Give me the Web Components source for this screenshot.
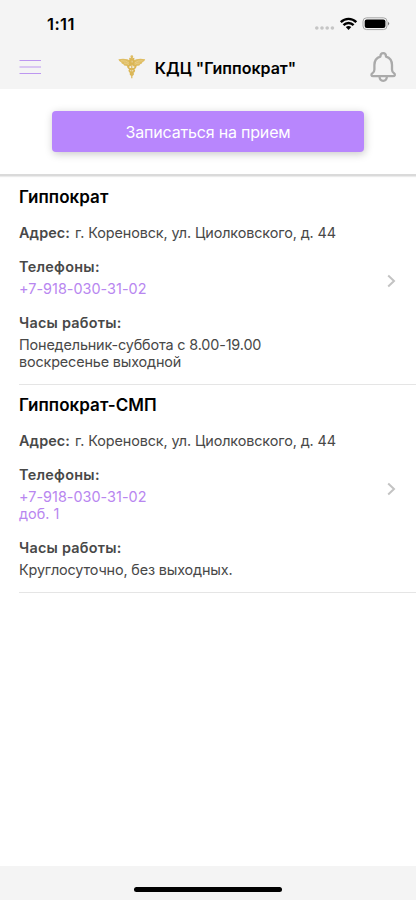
<!DOCTYPE html>
<html lang="ru">
<head>
<meta charset="utf-8">
<title>КДЦ "Гиппократ"</title>
<style>
body { margin: 0; background: #fff; font-family: Inter, "Liberation Sans", sans-serif; color: #000; }
</style>
</head>
<body>
<clinic-app></clinic-app>
<script>
function define(name, html) {
  const template = document.createElement('template');
  template.innerHTML = html;
  customElements.define(name, class extends HTMLElement {
    constructor() {
      super();
      this.attachShadow({ mode: 'open' }).append(template.content.cloneNode(true));
    }
  });
}

define('status-bar', `
<style>
:host { display: flex; height: 47px; box-sizing: border-box; padding: 14px 26.5px 0 47px; justify-content: space-between; align-items: flex-start; }
.time { font-size: 16.5px; line-height: 20px; font-weight: 600; letter-spacing: .4px; }
svg { display: block; }
</style>
<span class="time">1:11</span>
<svg width="76" height="20" viewBox="0 0 76 20">
  <g fill="#c5c5c5"><circle cx="2.8" cy="14" r="1.8"/><circle cx="8" cy="14" r="1.8"/><circle cx="13.2" cy="14" r="1.8"/><circle cx="18.4" cy="14" r="1.8"/></g>
  <g fill="none" stroke="#000" stroke-width="2.4">
    <path d="M26.8 8.2C31.2 3.7 37.9 3.7 42.3 8.2"/>
    <path d="M29.5 11.2C32.3 8.3 36.8 8.3 39.6 11.2"/>
  </g>
  <path d="M31.8 13.1Q34.55 10.8 37.3 13.1L34.55 16Z"/>
  <rect x="49" y="3.8" width="24" height="11.8" rx="3.6" fill="#f4f4f4" stroke="#a5a5a5"/>
  <rect x="50.7" y="5.4" width="20.7" height="8.6" rx="2"/>
  <path d="M74 7.8Q76.4 9.6 74 11.4Z" fill="#777"/>
</svg>`);

define('nav-bar', `
<style>
:host { display: grid; grid-template-columns: 22px 1fr 28px; align-items: center; height: 40px; padding: 0 19px; }
.title { display: flex; align-items: center; justify-content: center; gap: 9px; padding-left: 4px; font-size: 16px; line-height: 22px; font-weight: 600; white-space: nowrap; }
.title span { padding-top: 1px; }
svg { display: block; flex: none; }
</style>
<svg width="22" height="16" viewBox="0 0 22 16" stroke="#bd97f0" stroke-width="1.1"><path d="M.5 1.5H22M.5 8H22M.5 14.5H22"/></svg>
<div class="title">
  <svg width="28" height="24" viewBox="0 0 28 24">
    <g fill="#dfbd62">
      <path d="M.4 4.2Q8 2.5 13 6V11Q10 12.7 8.3 10.8Q6 11.2 5.4 9.2Q3.2 9 3.2 7.3Q1 6.8.4 4.2Z"/>
      <path d="M27.2 4.2Q19.6 2.5 14.6 6V11Q17.6 12.7 19.3 10.8Q21.6 11.2 22.2 9.2Q24.4 9 24.4 7.3Q26.6 6.8 27.2 4.2Z"/>
      <circle cx="13.8" cy="1.7" r="1.4"/>
    </g>
    <g fill="none" stroke="#dbb655">
      <path stroke-width="1.2" d="M13.8 2V23.2"/>
      <path stroke-width="1.7" d="M11.2 3.6C16.6 4.6 17.5 7.4 13.8 8.8C8.8 10.3 8.8 13.2 13.8 14C17.4 14.8 16.8 17 13.8 17.6C11.6 18.4 12.4 19.8 13.8 20.3M16.4 3.6C11 4.6 10.1 7.4 13.8 8.8C18.8 10.3 18.8 13.2 13.8 14C10.2 14.8 10.8 17 13.8 17.6C16 18.4 15.2 19.8 13.8 20.3"/>
    </g>
    <path d="M3 5.8Q8 5.3 11 8M24.6 5.8Q19.6 5.3 16.6 8M6 8Q9 7.7 11 9.7M21.6 8Q18.6 7.7 16.6 9.7" fill="none" stroke="#eed9a0" stroke-width=".6"/>
  </svg>
  <span><slot></slot></span>
</div>
<svg width="28" height="32" viewBox="0 0 28 32" fill="none" stroke="#aaa" stroke-width="2.3" stroke-linejoin="round">
  <path d="M11.4 5.6Q11.4 2.2 14.2 2.2Q17 2.2 17 5.6Q23 7.4 23 14V18.5Q23 21.2 25 22.3Q26.2 23.1 25.8 24.3Q25.4 25.2 24 25.2H4.2Q2.8 25.2 2.5 24.3Q2.1 23.1 3.4 22.3Q5.4 21.2 5.4 18.5V14Q5.4 7.4 11.4 5.6Z"/>
  <path d="M10.5 25.5Q10.8 29.8 14.2 29.8Q17.6 29.8 17.9 25.5"/>
</svg>`);

define('action-button', `
<style>
:host { display: block; }
button { display: block; width: 100%; height: 41px; padding: 0; border: 0; border-radius: 4px; background: #b886fd; color: #fff; font: 400 16px/42px Inter, "Liberation Sans", sans-serif; letter-spacing: -.19px; box-shadow: 1px 2px 8px rgba(0,0,0,.22); }
</style>
<button><slot></slot></button>`);

define('clinic-row', `
<style>
:host { display: grid; grid-template-columns: 1fr 9px; align-items: center; height: 208px; box-sizing: border-box; margin-left: 19px; padding-right: 20px; border-bottom: 1px solid #e5e5e5; font-size: 14.4px; line-height: 18px; color: #484848; }
.info { align-self: start; padding-top: 10px; white-space: nowrap; }
.name { color: #000; font-size: 17px; line-height: 20px; font-weight: 600; letter-spacing: .06px; margin-bottom: 17px; }
.label { font-weight: 600; letter-spacing: .28px; }
.address { display: flex; gap: 5px; letter-spacing: -.11px; }
.address .label { letter-spacing: .12px; }
.group { margin-top: 16px; }
.hours { margin-top: 17px; }
.hours .label { letter-spacing: .24px; }
.value { margin-top: 4px; line-height: 17px; }
.phone { color: #b886f0; letter-spacing: .03px; }
.schedule { letter-spacing: -.15px; }
svg { display: block; }
</style>
<div class="info">
  <div class="name"><slot name="name"></slot></div>
  <div class="address"><span class="label">Адрес:</span><slot name="address"></slot></div>
  <div class="group"><div class="label">Телефоны:</div><div class="value phone"><slot name="phone"></slot></div></div>
  <div class="group hours"><div class="label">Часы работы:</div><div class="value schedule"><slot name="hours"></slot></div></div>
</div>
<svg width="9" height="14" viewBox="0 0 9 14" fill="none" stroke="#c3c3c3" stroke-width="2"><path d="M1.2 1.5L7 7L1.2 12.5"/></svg>`);

define('clinic-app', `
<style>
:host { display: flex; flex-direction: column; width: 416px; height: 900px; overflow: hidden; background: #fff; }
header { background: #f4f4f4; height: 88.5px; box-sizing: border-box; flex: none; }
.cta { padding: 22.5px 52px; border-bottom: 2px solid #dadada; box-shadow: 0 1px 1px rgba(0,0,0,.08); height: 87.5px; box-sizing: border-box; flex: none; margin-bottom: 1px; }
main { flex: 1; }
footer { height: 34px; background: #f4f4f4; display: flex; justify-content: center; align-items: flex-end; padding-bottom: 8px; box-sizing: border-box; flex: none; }
.home { width: 148px; height: 5px; border-radius: 3px; background: #000; }
</style>
<header><status-bar></status-bar><nav-bar>КДЦ "Гиппократ"</nav-bar></header>
<section class="cta"><action-button>Записаться на прием</action-button></section>
<main>
  <clinic-row>
    <span slot="name">Гиппократ</span><span slot="address">г. Кореновск, ул. Циолковского, д. 44</span>
    <span slot="phone">+7-918-030-31-02</span>
    <span slot="hours">Понедельник-суббота с 8.00-19.00<br>воскресенье выходной</span>
  </clinic-row>
  <clinic-row>
    <span slot="name">Гиппократ-СМП</span><span slot="address">г. Кореновск, ул. Циолковского, д. 44</span>
    <span slot="phone">+7-918-030-31-02<br>доб. 1</span>
    <span slot="hours">Круглосуточно, без выходных.</span>
  </clinic-row>
</main>
<footer><div class="home"></div></footer>`);
</script>
</body>
</html>
